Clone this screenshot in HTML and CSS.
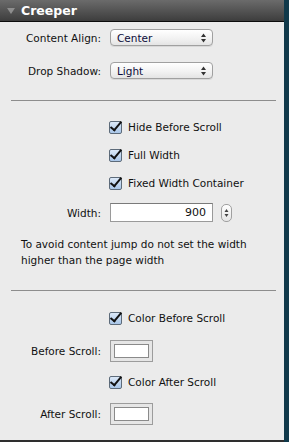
FILE: index.html
```html
<!DOCTYPE html>
<html lang="en">
  <head>
    <meta charset="UTF-8" />
    <title>Creeper</title>
    <link rel="stylesheet" href="styles.css">
  </head>
  <body>
    <div class="panel">
      <!-- header -->
      <div class="panel-head">
        <span class="disclosure"></span>
        <span class="panel-title">Creeper</span>
      </div>

      <!-- layout options -->
      <div class="section section-top">
        <div class="row">
          <label class="row-label">Content Align:</label>
          <div class="select">
            <span>Center</span>
            <svg class="select-arrows" width="7" height="10" viewBox="0 0 7 10"><path d="M3.5 0.5 L6 4 L1 4 Z M3.5 9.5 L6 6 L1 6 Z" fill="#333"/></svg>
          </div>
        </div>
        <div class="row">
          <label class="row-label">Drop Shadow:</label>
          <div class="select">
            <span>Light</span>
            <svg class="select-arrows" width="7" height="10" viewBox="0 0 7 10"><path d="M3.5 0.5 L6 4 L1 4 Z M3.5 9.5 L6 6 L1 6 Z" fill="#333"/></svg>
          </div>
        </div>
      </div>

      <hr class="divider" />

      <!-- scroll options -->
      <div class="section section-mid">
        <div class="check-row">
          <span class="check"></span>
          <span>Hide Before Scroll</span>
        </div>
        <div class="check-row">
          <span class="check"></span>
          <span>Full Width</span>
        </div>
        <div class="check-row">
          <span class="check"></span>
          <span>Fixed Width Container</span>
        </div>
        <div class="row row-width">
          <label class="row-label">Width:</label>
          <div class="text-input">900</div>
          <div class="stepper">
            <svg width="9" height="16" viewBox="0 0 9 16"><path d="M4.5 4 L6.5 7 L2.5 7 Z M4.5 12 L6.5 9 L2.5 9 Z" fill="#444"/></svg>
          </div>
        </div>
        <p class="help">To avoid content jump do not set the width higher than the page width</p>
      </div>

      <hr class="divider" />

      <!-- colours -->
      <div class="section section-bottom">
        <div class="check-row">
          <span class="check"></span>
          <span>Color Before Scroll</span>
        </div>
        <div class="row row-swatch">
          <label class="row-label">Before Scroll:</label>
          <div class="swatch"><span></span></div>
        </div>
        <div class="check-row check-after">
          <span class="check"></span>
          <span>Color After Scroll</span>
        </div>
        <div class="row row-swatch">
          <label class="row-label">After Scroll:</label>
          <div class="swatch"><span></span></div>
        </div>
      </div>
    </div>
  </body>
</html>
```

FILE: styles.css
```css
/* page */
body {
  margin: 0;
  background: #10394a;
  font-family: 'DejaVu Sans', 'Liberation Sans', sans-serif;
  font-size: 10.5px;
  color: #111;
}

.panel {
  width: 284px;
  height: 440px;
  background: #ebebeb;
  border-bottom: 2px solid #2e2e2e;
}

/* header */
.panel-head {
  height: 21px;
  display: flex;
  align-items: center;
  background: linear-gradient(#6b6b6b, #3d3d3d);
  border-bottom: 1px solid #0c0c0c;
}

.disclosure {
  width: 0;
  height: 0;
  margin-left: 7px;
  margin-right: 6px;
  border-left: 4px solid transparent;
  border-right: 4px solid transparent;
  border-top: 6px solid #8e8e8e;
}

.panel-title {
  color: #fff;
  font-weight: bold;
  font-size: 12.5px;
}

/* sections */
.section-top {
  padding: 7px 0 21px;
}

.section-mid {
  padding: 12px 0 22px;
}

.section-bottom {
  padding: 13px 0 0;
}

.divider {
  margin: 0 8px 0 11px;
  border: none;
  border-top: 1px solid #8d8d8d;
}

.row {
  display: flex;
  align-items: center;
  height: 17px;
}

.row + .row {
  margin-top: 16px;
}

.row-label {
  width: 101px;
  text-align: right;
  margin-right: 9px;
}

/* popup menu */
.select {
  width: 103px;
  height: 17px;
  box-sizing: border-box;
  display: flex;
  align-items: center;
  justify-content: space-between;
  padding: 0 5px 0 6px;
  border: 1px solid #a0a0a0;
  border-radius: 4px;
  background: linear-gradient(#ffffff, #f1f1f1 60%, #e4e4e4);
  box-shadow: 0 1px 0 rgba(0, 0, 0, 0.08);
  color: #0c0c3a;
}

/* checkboxes */
.check-row {
  display: flex;
  align-items: center;
  height: 28px;
  padding-left: 109px;
}

.check {
  width: 11px;
  height: 11px;
  margin-right: 6px;
  position: relative;
  border: 1px solid #5d6b7a;
  border-radius: 2px;
  background: linear-gradient(#dbe8f7, #a9c6e8);
}

.check::after {
  content: '';
  position: absolute;
  left: 3px;
  top: -3px;
  width: 4px;
  height: 10px;
  border-right: 2px solid #111;
  border-bottom: 2px solid #111;
  transform: rotate(40deg);
}

/* width input */
.row-width {
  height: 19px;
  margin-top: 6px;
}

.text-input {
  width: 95px;
  height: 17px;
  line-height: 17px;
  padding-right: 6px;
  text-align: right;
  background: #fff;
  border: 1px solid #9a9a9a;
  border-top-color: #7a7a7a;
  font-size: 11px;
}

.stepper {
  width: 9px;
  height: 16px;
  margin-left: 8px;
  border: 1px solid #a0a0a0;
  border-radius: 5px;
  background: linear-gradient(#ffffff, #e6e6e6);
  display: flex;
}

.help {
  margin: 14px 0 0;
  padding: 0 20px 0 21px;
  line-height: 16px;
}

/* colour wells */
.row-swatch {
  height: 22px;
}

.row + .row-swatch,
.row-swatch {
  margin-top: 8px;
}

.check-after {
  margin-top: 6px;
}

.check-after + .row-swatch {
  margin-top: 7px;
}

.swatch {
  width: 43px;
  height: 22px;
  border: 1px solid #9c9c9c;
  background: #e6e6e6;
  display: flex;
  padding: 3px;
  box-sizing: border-box;
}

.swatch span {
  flex: 1;
  background: #fff;
  border: 1px solid #8a8a8a;
}
```
